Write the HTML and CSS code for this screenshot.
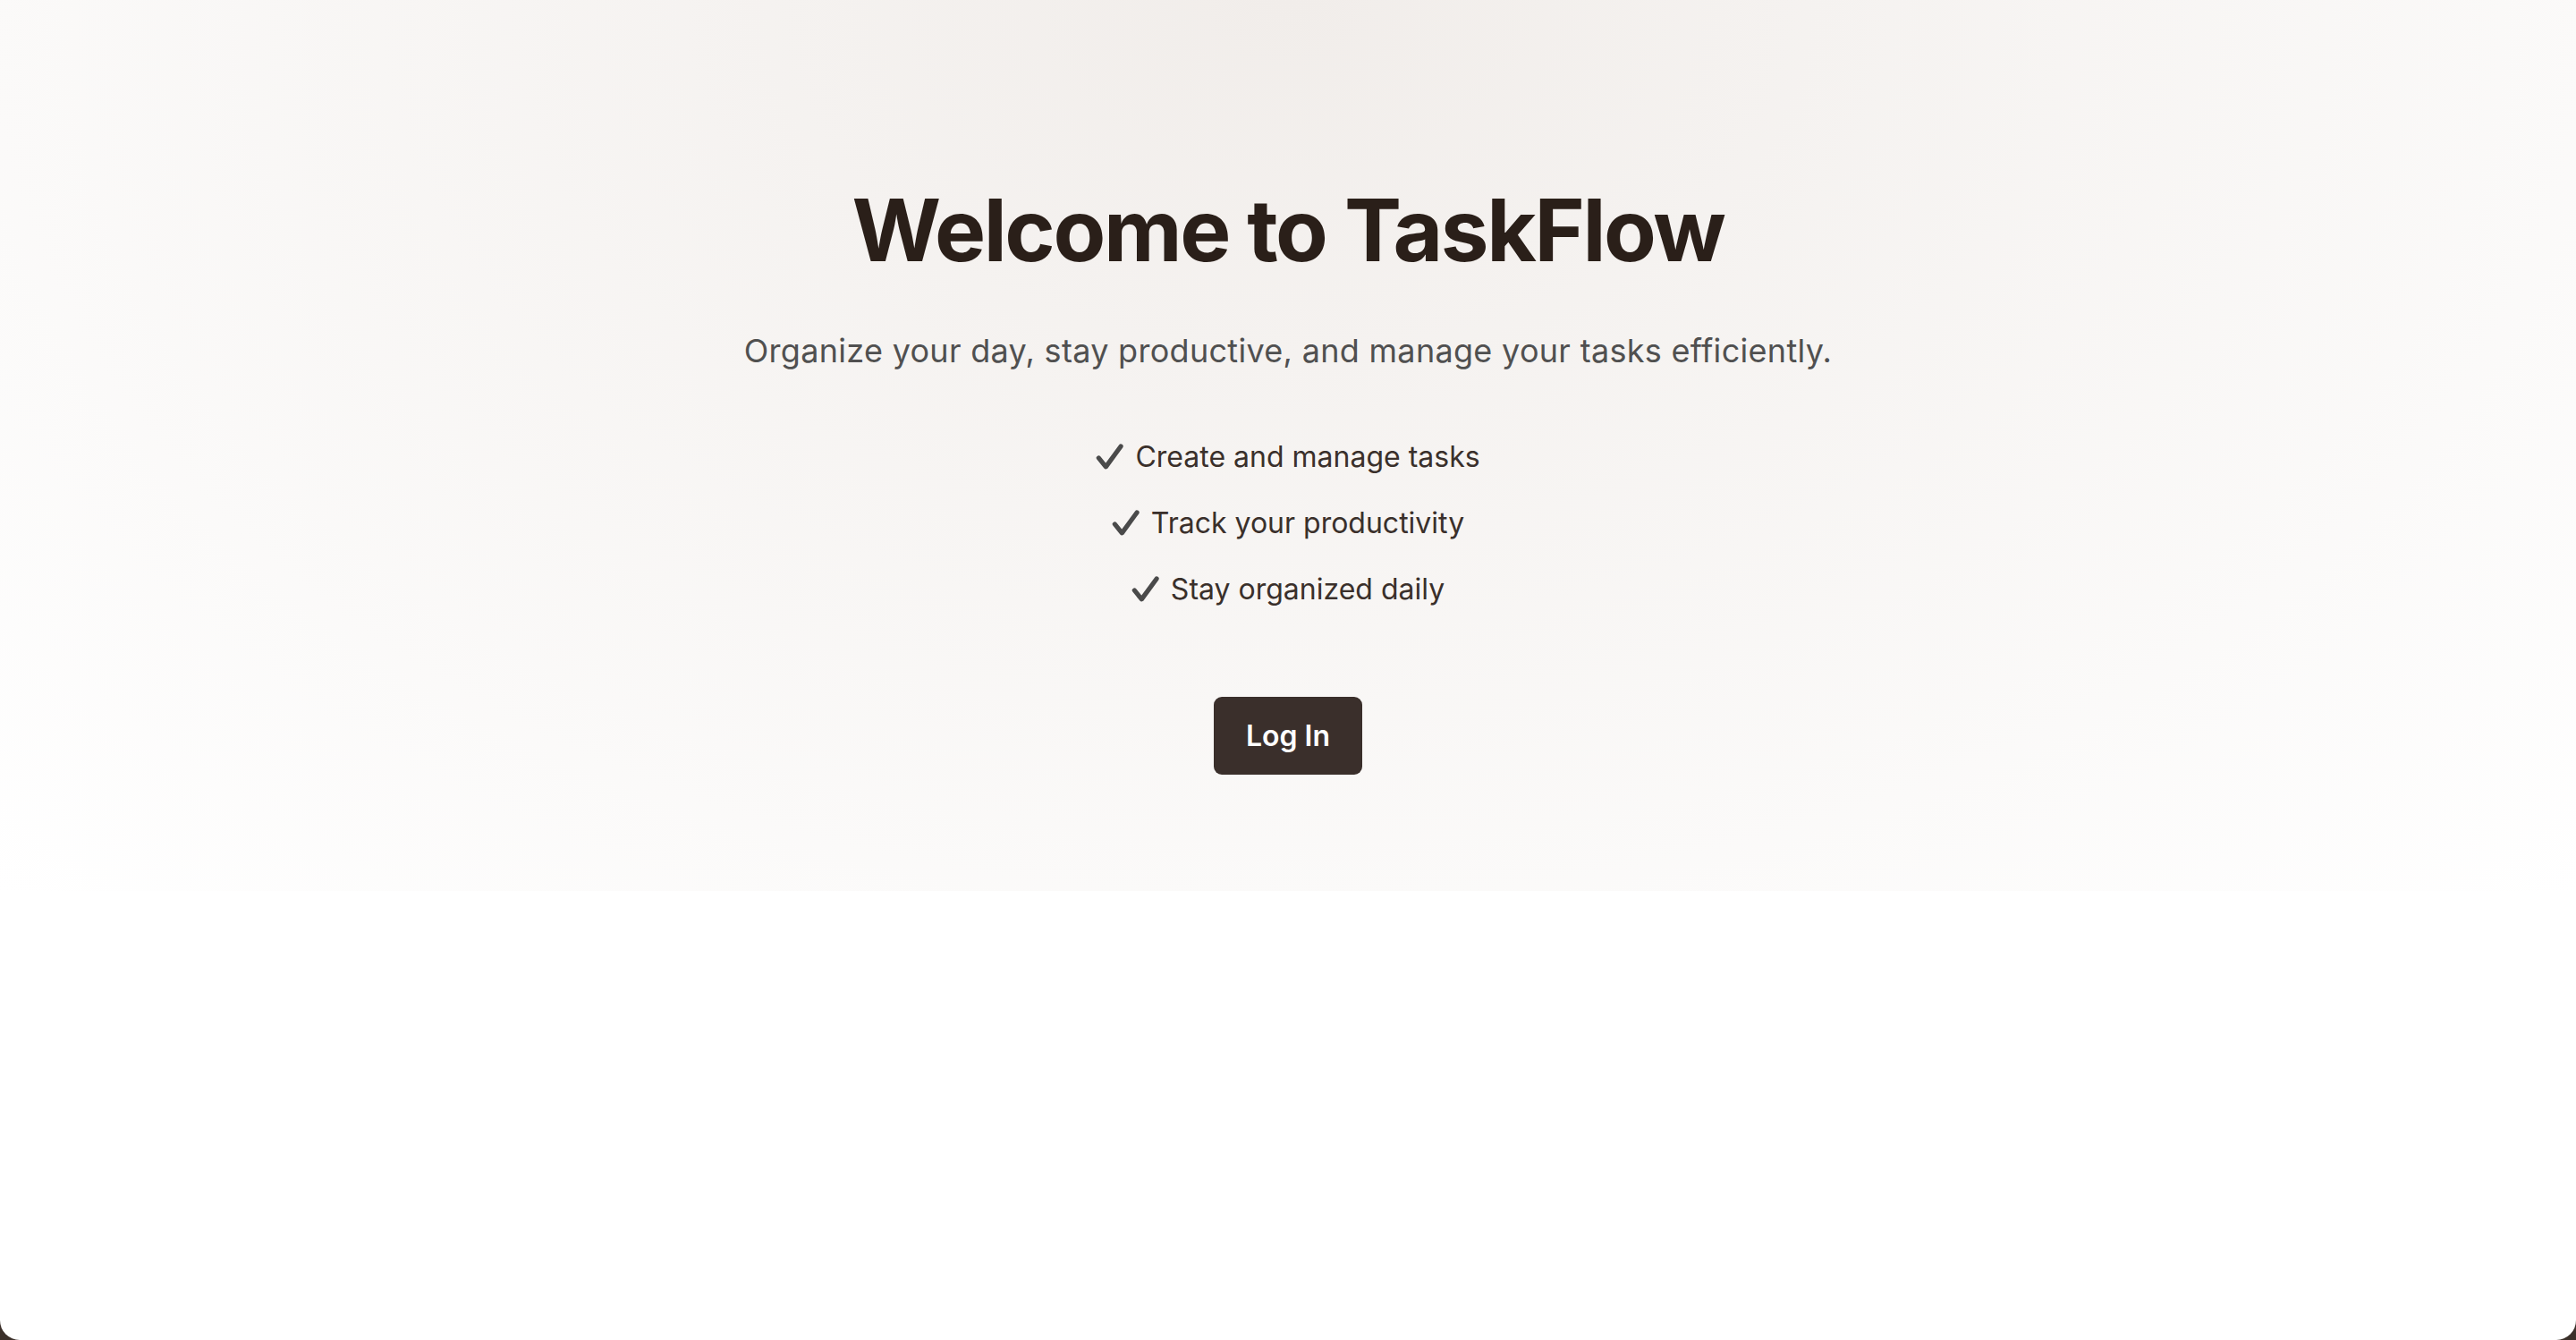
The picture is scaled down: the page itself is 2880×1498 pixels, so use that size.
FILE: index.html
```html
<!DOCTYPE html>
<html lang="en">
<head>
<meta charset="utf-8">
<title>TaskFlow</title>
<link rel="stylesheet" href="styles.css">
</head>
<body>
<div class="window">
  <section class="hero">
    <h1 class="title">Welcome to TaskFlow</h1>
    <p class="subtitle">Organize your day, stay productive, and manage your tasks efficiently.</p>
    <ul class="features">
      <li class="feature"><svg class="check" viewBox="0 0 30 28" aria-hidden="true"><path d="M3.2 15.4 L11 25 L27.2 2.8"/></svg>Create and manage tasks</li>
      <li class="feature"><svg class="check" viewBox="0 0 30 28" aria-hidden="true"><path d="M3.2 15.4 L11 25 L27.2 2.8"/></svg>Track your productivity</li>
      <li class="feature"><svg class="check" viewBox="0 0 30 28" aria-hidden="true"><path d="M3.2 15.4 L11 25 L27.2 2.8"/></svg>Stay organized daily</li>
    </ul>
    <button class="login" type="button">Log In</button>
  </section>
</div>
</body>
</html>
```

FILE: styles.css
```css
html, body {
  margin: 0;
  padding: 0;
}
body {
  background: #3b302a;
  font-family: Inter, "Noto Sans", "Liberation Sans", sans-serif;
}
.window {
  height: 1498px;
  background: #ffffff;
  border-radius: 0 0 22px 22px;
  overflow: hidden;
}
.hero {
  height: 996px;
  box-sizing: border-box;
  padding-top: 200px;
  display: flex;
  flex-direction: column;
  align-items: center;
  background: radial-gradient(ellipse at top, #f1edea 0%, #ffffff 100%);
}
.title {
  margin: 0;
  font-size: 96px;
  line-height: 115px;
  font-weight: 700;
  letter-spacing: -2.4px;
  color: #2a1f19;
}
.subtitle {
  margin: 50px 0 0;
  font-size: 36px;
  line-height: 54px;
  font-weight: 400;
  letter-spacing: 0.3px;
  color: #505050;
}
.features {
  list-style: none;
  margin: 68px 0 0;
  padding: 0;
  display: flex;
  flex-direction: column;
  align-items: center;
  gap: 26px;
}
.feature {
  display: flex;
  align-items: center;
  gap: 13px;
  font-size: 32px;
  line-height: 48px;
  color: #3a302b;
}
.check {
  width: 31px;
  height: 29px;
  flex: none;
  margin-top: -2px;
}
.check path {
  fill: none;
  stroke: #4a4a4a;
  stroke-width: 5;
  stroke-linecap: round;
  stroke-linejoin: round;
}
.login {
  margin-top: 96px;
  padding: 20px 36px;
  border: none;
  border-radius: 9px;
  background: #3a2f2b;
  color: #ffffff;
  font-family: Inter, "Noto Sans", "Liberation Sans", sans-serif;
  font-size: 32px;
  line-height: 47px;
  font-weight: 600;
}
```
